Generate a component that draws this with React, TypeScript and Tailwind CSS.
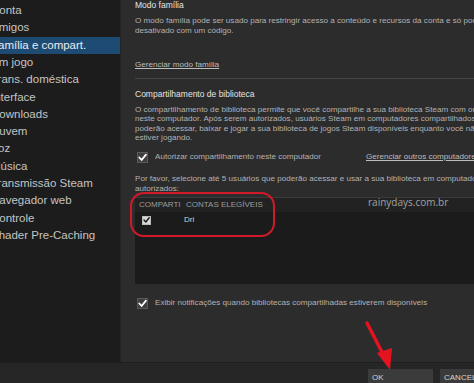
import React from "react";

const items = [
  "Conta",
  "Amigos",
  "Família e compart.",
  "Em jogo",
  "Trans. doméstica",
  "Interface",
  "Downloads",
  "Nuvem",
  "Voz",
  "Música",
  "Transmissão Steam",
  "Navegador web",
  "Controle",
  "Shader Pre-Caching",
];

function Check({ small = false }: { small?: boolean }) {
  return (
    <div
      className={
        small
          ? "w-[9px] h-[9px] shrink-0 bg-[#d8d8d8] border border-[#bdbdbd] flex items-center justify-center"
          : "w-[11px] h-[11px] shrink-0 bg-[#3e3e3f] border border-[#5a5a5a] flex items-center justify-center"
      }
    >
      <svg viewBox="0 0 10 10" className={small ? "w-[8px] h-[8px]" : "w-[9px] h-[9px]"}>
        <polyline
          points="1.5,5 4,7.8 8.8,1.8"
          fill="none"
          stroke={small ? "#1a1a1a" : "#ffffff"}
          strokeWidth="2"
          strokeLinecap="round"
          strokeLinejoin="round"
        />
      </svg>
    </div>
  );
}

export default function App() {
  return (
    <div className="relative w-[474px] h-[383px] overflow-hidden flex flex-col bg-[#1c1c1d] font-['Liberation_Sans',Arial,sans-serif]">
      <div className="flex flex-1 min-h-0">
        <aside className="w-[120px] shrink-0 overflow-hidden bg-[#1c1c1d] pt-[2px]">
          {items.map((t, i) => (
            <div
              key={t}
              className={
                "h-[17.3px] flex items-center whitespace-nowrap text-[11.5px] " +
                (i === 2 ? "bg-[#1e4b74] text-[#ececec]" : "text-[#c4c4c4]")
              }
            >
              <span className="ml-[-9px] shrink-0">{t}</span>
            </div>
          ))}
        </aside>
        <main className="flex-1 min-w-0 overflow-hidden bg-[#2c2c2d] border-l border-[#232324] pl-[14px] text-[8.1px] text-[#b2b2b2] whitespace-nowrap">
          <div className="h-[10px] leading-[10px] text-[8.5px] text-[#e4e4e4]">Modo família</div>
          <div className="mt-[6px] leading-[10px]">
            O modo família pode ser usado para restringir acesso a conteúdo e recursos da conta e só pode ser
            <br />
            desativado com um código.
          </div>
          <div className="mt-[24px] h-[10px] leading-[10px] underline text-[#bdbdbd]">Gerenciar modo família</div>
          <div className="mt-[8px] h-px w-[400px] bg-[#474748]" />
          <div className="mt-[10px] h-[10px] leading-[10px] text-[8.5px] text-[#e4e4e4]">Compartilhamento de biblioteca</div>
          <div className="mt-[5.5px] leading-[9.5px]">
            O compartilhamento de biblioteca permite que você compartilhe a sua biblioteca Steam com outros usuários
            <br />
            neste computador. Após serem autorizados, usuários Steam em computadores compartilhados
            <br />
            poderão acessar, baixar e jogar a sua biblioteca de jogos Steam disponíveis enquanto você não
            <br />
            estiver jogando.
          </div>
          <div className="mt-[8.5px] h-[12px] flex items-center">
            <div className="ml-[2px] shrink-0">
              <Check />
            </div>
            <span className="ml-[7px] w-[211px] shrink-0">Autorizar compartilhamento neste computador</span>
            <span className="shrink-0 underline text-[#bdbdbd]">Gerenciar outros computadores</span>
          </div>
          <div className="mt-[11px] leading-[9.5px]">
            Por favor, selecione até 5 usuários que poderão acessar e usar a sua biblioteca em computadores
            <br />
            autorizados:
          </div>
          <div className="mt-[4px] h-[87px] w-[400px] bg-[#1b1b1c] flex flex-col">
            <div className="h-[15px] flex items-center bg-[#222223] border-t border-[#3a3a3b] text-[8px] text-[#9c9c9c]">
              <span className="ml-[4px] w-[47px] shrink-0 overflow-hidden">COMPARTI</span>
              <span className="shrink-0">CONTAS ELEGÍVEIS</span>
            </div>
            <div className="h-[16px] flex items-center">
              <div className="ml-[7px] shrink-0">
                <Check small />
              </div>
              <span className="ml-[33px] text-[#cfcfcf]">Dri</span>
            </div>
          </div>
          <div className="mt-[13px] h-[12px] flex items-center">
            <div className="ml-[2px] shrink-0">
              <Check />
            </div>
            <span className="ml-[7px] shrink-0">Exibir notificações quando bibliotecas compartilhadas estiverem disponíveis</span>
          </div>
        </main>
      </div>
      <footer className="h-[21px] shrink-0 bg-[#262627] border-t border-[#1e1e1f] flex items-start pl-[368px] pt-[6px] gap-[7px] text-[8px] text-[#d2d2d2]">
        <div className="w-[65px] h-[20px] shrink-0 bg-[#3b3b3c] pl-[4px] pt-[3px]">OK</div>
        <div className="w-[65px] h-[20px] shrink-0 bg-[#3b3b3c] pl-[4px] pt-[3px]">CANCELAR</div>
      </footer>

      {/* annotations */}
      <div className="absolute left-[130px] top-[192px] w-[145px] h-[45px] border-[2.5px] border-[#d2192a] rounded-[14px]" />
      <div className="absolute left-[368px] top-[195px] text-[10px] text-[#a3a3a3] font-['Open_Sans',sans-serif]">
        rainydays.com.br
      </div>
      <svg className="absolute left-0 top-0 w-[474px] h-[383px] pointer-events-none" viewBox="0 0 474 383">
        <line x1="367" y1="323" x2="384" y2="356" stroke="#e3141f" strokeWidth="3.5" strokeLinecap="round" />
        <polygon points="377,353 392,348 390,370" fill="#e3141f" />
      </svg>
    </div>
  );
}
